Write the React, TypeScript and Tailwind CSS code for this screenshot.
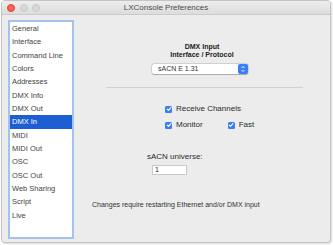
const items = [
  "General",
  "Interface",
  "Command Line",
  "Colors",
  "Addresses",
  "DMX Info",
  "DMX Out",
  "DMX In",
  "MIDI",
  "MIDI Out",
  "OSC",
  "OSC Out",
  "Web Sharing",
  "Script",
  "Live",
];

function Check({ label }: { label: string }) {
  return (
    <div className="flex items-center h-[10px]">
      <div className="w-[7px] h-[7px] rounded-[1.5px] bg-[#3a7ef2] flex items-center justify-center">
        <svg width="6" height="6" viewBox="0 0 10 10">
          <path d="M2 5.2 L4.2 7.4 L8.2 2.6" fill="none" stroke="#fff" strokeWidth="1.8" strokeLinecap="round" strokeLinejoin="round" />
        </svg>
      </div>
      <span className="ml-[4px] text-[8px] text-[#2a2a2a]">{label}</span>
    </div>
  );
}

export default function App() {
  return (
    <div className="w-[333px] h-[245px] bg-white overflow-hidden" style={{ fontFamily: '"Liberation Sans", Arial, sans-serif' }}>
      <div className="ml-[1px] w-[330px] h-[243px] rounded-[4px] border border-[#c4c4c4] bg-[#ececec] shadow-[1px_1px_2px_rgba(0,0,0,0.15)] flex flex-col overflow-hidden">
        <div className="relative h-[14px] bg-gradient-to-b from-[#eeeeee] to-[#dcdcdc] border-b border-[#cbcbcb] flex items-center justify-center">
          <div className="absolute left-[5px] top-[2.5px] flex gap-[4.5px]">
            <div className="w-[8px] h-[8px] rounded-full bg-[#fc5f57] border border-[#e0443e]" />
            <div className="w-[8px] h-[8px] rounded-full bg-[#d9d9d9] border border-[#c8c8c8]" />
            <div className="w-[8px] h-[8px] rounded-full bg-[#d9d9d9] border border-[#c8c8c8]" />
          </div>
          <span className="text-[8px] text-[#4a4a4a]">LXConsole Preferences</span>
        </div>
        <div className="flex flex-1">
          <div className="ml-[6px] mt-[5px] w-[66px] h-[219px] border-2 border-[#a3c3ee] bg-white">
            {items.map((it) => (
              <div
                key={it}
                className={
                  it === "DMX In"
                    ? "h-[13.33px] flex items-center pl-[2px] bg-[#1d5fd2] text-white text-[7.5px]"
                    : "h-[13.33px] flex items-center pl-[2px] text-[#444] text-[7.5px]"
                }
              >
                {it}
              </div>
            ))}
          </div>
          <div className="flex-1 flex flex-col">
            <div className="mt-[28px] flex flex-col items-center text-[7px] font-bold text-[#222] leading-[8px]">
              <span>DMX Input</span>
              <span>Interface / Protocol</span>
            </div>
            <div className="mt-[5px] ml-[78px] w-[96px] h-[10px] bg-white rounded-[2px] shadow-[0_0_0_0.5px_rgba(0,0,0,0.2),0_0.5px_1px_rgba(0,0,0,0.2)] flex items-center justify-between">
              <span className="ml-[6px] text-[7px] text-[#333]">sACN E 1.31</span>
              <div className="w-[10px] h-[10px] rounded-[2px] bg-[#3a7ef2] flex items-center justify-center">
                <svg width="6" height="8" viewBox="0 0 6 8">
                  <path d="M1.5 3 L3 1.5 L4.5 3 M1.5 5 L3 6.5 L4.5 5" fill="none" stroke="#fff" strokeWidth="0.9" />
                </svg>
              </div>
            </div>
            <div className="mt-[13px] ml-[32px] mr-[27px] h-px bg-[#d0d0d0]" />
            <div className="mt-[16px] ml-[91px]">
              <Check label="Receive Channels" />
            </div>
            <div className="mt-[6px] ml-[91px] flex gap-[25px]">
              <Check label="Monitor" />
              <Check label="Fast" />
            </div>
            <div className="mt-[22px] ml-[73px] text-[8px] text-[#2a2a2a] leading-[10px]">sACN universe:</div>
            <div className="mt-[3px] ml-[78px] w-[35px] h-[10px] bg-white border border-[#c8c8c8] flex items-center">
              <span className="ml-[2px] text-[7px] text-[#222]">1</span>
            </div>
            <div className="mt-[26px] ml-[18px] text-[7px] text-[#333] leading-[8px]">Changes require restarting Ethernet and/or DMX input</div>
          </div>
        </div>
      </div>
    </div>
  );
}
